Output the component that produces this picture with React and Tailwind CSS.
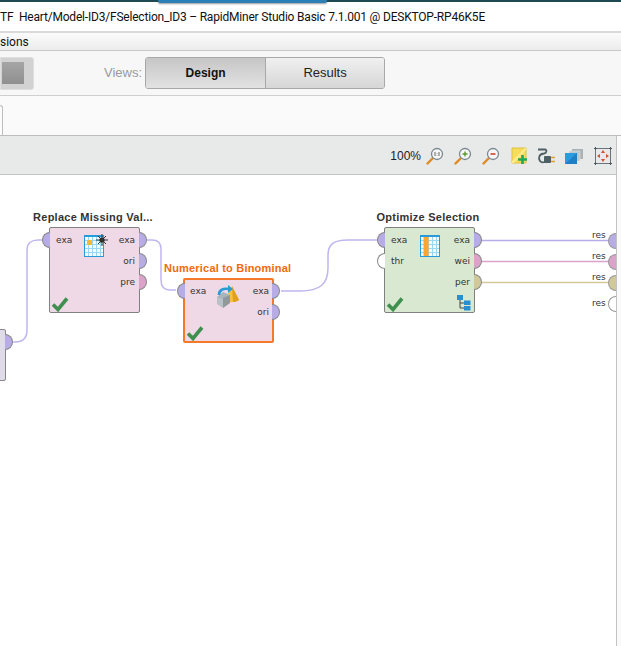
const font = "font-['Liberation_Sans',Arial,sans-serif]"

function Port({ side, top, color }) {
  const sideCls = side === 'left'
    ? 'left-[-8px] rounded-l-full border-r-0'
    : 'right-[-8px] rounded-r-full border-l-0'
  return <div className={`absolute w-[8px] h-[16px] border-[1.5px] border-[#888] ${sideCls}`} style={{ top, backgroundColor: color }} />
}

function PortLabel({ children }) {
  return <div className="h-[21px] text-[9px] leading-[21px] text-[#333] font-['DejaVu_Sans',sans-serif]">{children}</div>
}

function Check() {
  return (
    <svg viewBox="0 0 18 16" className="absolute left-[1px] bottom-0 w-[18px] h-[16px]" fill="none">
      <path d="M2 8.5 L7 13.5 L16 2.5" stroke="#3f8f4f" strokeWidth="3.6" />
    </svg>
  )
}

function GridIcon({ className, children }) {
  const cols = [4, 8, 12, 16]
  const rows = [4, 8, 12, 16]
  return (
    <svg viewBox="0 0 20 22" className={className}>
      <rect x="0.5" y="0.5" width="19" height="21" fill="#f4fbff" stroke="#2a9bd8" />
      {cols.map((x) => <path key={x} d={`M${x}.5 1V21`} stroke="#9dd4f2" />)}
      {rows.map((y) => <path key={y} d={`M1 ${y + 1}.5H19`} stroke="#9dd4f2" />)}
      {children}
      <path d="M0 1H20" stroke="#2a9bd8" strokeWidth="2" />
    </svg>
  )
}

function Node({ title, titleColor = 'text-[#333]', pos, size, bg, border, selected, left, right, icon }) {
  const pad = selected ? 'pt-[1px] pl-[5px] pr-[3px]' : 'pt-[2px] pl-[6px] pr-[4px]'
  const first = selected ? 3 : 4
  return (
    <div className={`absolute ${pos}`}>
      <div className={`absolute left-[-36px] top-[-16px] w-[160px] text-center text-[11px] leading-[13px] font-bold tracking-[0.25px] whitespace-nowrap ${titleColor} ${font}`}>{title}</div>
      <div className={`relative w-[91px] ${size} ${bg} ${border} rounded-[2px] ${pad} flex justify-between`}>
        <div>{left.map((p) => <PortLabel key={p.name}>{p.name}</PortLabel>)}</div>
        <div className="text-right">{right.map((p) => <PortLabel key={p.name}>{p.name}</PortLabel>)}</div>
        {left.map((p, i) => <Port key={p.name} side="left" top={first + i * 21} color={p.color} />)}
        {right.map((p, i) => <Port key={p.name} side="right" top={first + i * 21} color={p.color} />)}
        {icon}
        <Check />
      </div>
    </div>
  )
}

function Lens({ children }) {
  return (
    <svg viewBox="0 0 18 18" className="w-[18px] h-[18px]" fill="none">
      <path d="M1.5 16.5 L7 11" stroke="#e08a24" strokeWidth="2.4" strokeLinecap="round" />
      <circle cx="11" cy="7" r="5.5" fill="#f7f7f7" stroke="#7b8a90" strokeWidth="1.3" />
      {children}
    </svg>
  )
}

function Toolbar() {
  return (
    <div className="h-[39px] shrink-0 bg-[#e8e9e9] border-b border-[#c4c4c4] flex items-center justify-end gap-[10px] pr-[4px] pt-[2px]">
      <span className="text-[12px] text-[#222] mr-[-5px]">100%</span>
      <Lens><path d="M9 5v4M11 6v.5M11 8v.5M13 5v4" stroke="#666" /></Lens>
      <Lens><path d="M8.5 7h5M11 4.5v5" stroke="#5a9a30" strokeWidth="1.4" /></Lens>
      <Lens><path d="M8.5 7h5" stroke="#d2402a" strokeWidth="1.6" /></Lens>
      <svg viewBox="0 0 18 18" className="w-[18px] h-[18px] ml-[1px]">
        <path d="M1 1H15V16H1Z" fill="#f5dd5a" stroke="#e0c040" />
        <path d="M1 14L14 1H15V3L3 16H1Z" fill="#fbeb8a" />
        <path d="M11.5 8v9M7 12.5h9" stroke="#20a858" strokeWidth="2.6" />
      </svg>
      <svg viewBox="0 0 20 18" className="w-[20px] h-[18px] ml-[-3px]" fill="none">
        <path d="M2 2.5H9C11 2.5 11 6 8 6.5C3 7 2 11 4 14C5 15.5 7 15.5 9 15" stroke="#4f5f66" strokeWidth="1.8" />
        <rect x="8" y="9" width="7" height="7" rx="1" fill="#4f5f66" />
        <path d="M15 10.5h4" stroke="#e0a030" strokeWidth="1.5" />
        <path d="M15 14.5h4" stroke="#e0a030" strokeWidth="1.5" />
      </svg>
      <svg viewBox="0 0 20 16" className="w-[20px] h-[16px] ml-[-2px]">
        <rect x="8" y="1" width="11" height="10" fill="#a9b2b6" />
        <rect x="5" y="3" width="11" height="10" fill="#c0c7ca" stroke="#e8e9e9" strokeWidth=".5" />
        <rect x="1" y="5" width="12" height="11" fill="#2b9be0" />
        <path d="M1 16L13 5V16Z" fill="#1f7fc4" />
      </svg>
      <svg viewBox="0 0 18 18" className="w-[18px] h-[18px]" fill="none">
        <rect x="1.5" y="1.5" width="15" height="15" stroke="#6b7378" />
        <path d="M0 1.5h3M1.5 0v3M15 1.5h3M16.5 0v3M0 16.5h3M1.5 15v3M15 16.5h3M16.5 15v3" stroke="#4f5a60" />
        <path d="M9 3l2 3H7zM9 15l2-3H7zM3 9l3-2v4zM15 9l-3-2v4z" fill="#d2502a" />
      </svg>
    </div>
  )
}

function Canvas() {
  const purple = '#b7ace6'
  const pink = '#dba3c9'
  const tan = '#d1c99a'
  return (
    <div className="relative flex-1 overflow-hidden bg-white">
      <svg className="absolute left-0 top-0 w-[616px] h-[471px]" viewBox="0 175 616 471" fill="none" strokeWidth="1.5">
        <path d="M13 342H15C23 342 27 338 27 330V250C27 243 32 240 38 240H42" stroke="#c0b6ee" />
        <path d="M147 240H152C158 240 161 243 161 249V280C161 287 164 290 170 290H176" stroke="#c0b6ee" />
        <path d="M281 291H300C320 291 328 284 328 268V255C328 244 334 240 348 240H378" stroke="#c0b6ee" />
        <path d="M481 240.5H609" stroke={purple} />
        <path d="M481 261.5H609" stroke={pink} />
        <path d="M481 282.5H609" stroke={tan} />
      </svg>

      {/* operator cut off at the left edge */}
      <div className="absolute left-[-90px] top-[154px] w-[96px] h-[52px] bg-[#dfdbe9] border border-[#888] rounded-[2px]">
        <Port side="right" top={4} color={purple} />
      </div>

      <Node
        title="Replace Missing Val..."
        pos="left-[49px] top-[52px]"
        size="h-[86px]"
        bg="bg-[#f0d9e6]"
        border="border border-[#808080]"
        left={[{ name: 'exa', color: purple }]}
        right={[{ name: 'exa', color: purple }, { name: 'ori', color: purple }, { name: 'pre', color: pink }]}
        icon={
          <div className="absolute left-[34px] top-[7px] w-[22px] h-[23px]">
            <GridIcon className="w-[20px] h-[22px]">
              <rect x="3" y="5" width="5" height="5" fill="#f8b830" />
            </GridIcon>
            <svg viewBox="0 0 12 12" className="absolute right-[-2px] top-[-1px] w-[12px] h-[12px]">
              <circle cx="6" cy="6" r="2.6" fill="#222" />
              <path d="M6 0v12M0 6h12M2 2l8 8M10 2l-8 8" stroke="#333" />
            </svg>
          </div>
        }
      />

      <div className="absolute left-[164px] top-[87px] text-[11px] leading-[13px] font-bold tracking-[0.2px] text-[#f26a0a] whitespace-nowrap font-['Liberation_Sans',Arial,sans-serif]">Numerical to Binominal</div>
      <Node
        title=""
        pos="left-[183px] top-[103px]"
        size="h-[65px]"
        bg="bg-[#f0d9e6]"
        border="border-2 border-[#f5792a]"
        selected
        left={[{ name: 'exa', color: purple }]}
        right={[{ name: 'exa', color: purple }, { name: 'ori', color: purple }]}
        icon={
          <svg viewBox="0 0 24 24" className="absolute left-[31px] top-[5px] w-[24px] h-[24px]" fill="none">
            <path d="M16 1L23 15C19 18 12 18 9 15Z" fill="#f5c23c" />
            <path d="M16 1L23 15C21 16.5 19 17 17 17Z" fill="#e0a020" />
            <path d="M1 12V16L7 20L14 16V10L7 7Z" fill="#a9b4ba" />
            <path d="M7 13L14 10V18L7 23Z" fill="#8d999f" />
            <path d="M1 12L7 14V23L1 19Z" fill="#b7c1c6" />
            <path d="M3 10C3 5 7 3 13 4" stroke="#2a9bd8" strokeWidth="2.6" />
            <path d="M12 0L17 4L12 8Z" fill="#2a9bd8" />
          </svg>
        }
      />

      <Node
        title="Optimize Selection"
        pos="left-[384px] top-[52px]"
        size="h-[86px]"
        bg="bg-[#d9e8d0]"
        border="border border-[#808080]"
        left={[{ name: 'exa', color: purple }, { name: 'thr', color: '#fff' }]}
        right={[{ name: 'exa', color: purple }, { name: 'wei', color: pink }, { name: 'per', color: tan }]}
        icon={
          <>
            <GridIcon className="absolute left-[35px] top-[7px] w-[20px] h-[22px]">
              <rect x="3.5" y="2" width="5" height="19" fill="#f8a830" />
            </GridIcon>
            <svg viewBox="0 0 14 16" className="absolute right-[3px] bottom-[1px] w-[14px] h-[16px]" fill="none">
              <path d="M3 4V13H8M3 8H8" stroke="#444" />
              <rect x="0" y="0" width="6" height="5" fill="#2a8fd0" />
              <rect x="7" y="5.5" width="6.5" height="4.5" fill="#2a8fd0" />
              <rect x="7" y="11" width="6.5" height="4.5" fill="#2a8fd0" />
            </svg>
          </>
        }
      />

      {/* result ports on the right edge */}
      <div className="absolute right-0 top-[54px] flex flex-col items-end">
        {[purple, pink, tan, '#fff'].map((c, i) => (
          <div key={c} className="relative h-[21px] w-[30px] pl-[6px]">
            <div className={`text-[9px] leading-[13px] text-[#333] font-['DejaVu_Sans',sans-serif] ${i === 3 ? 'mt-[5px]' : ''}`}>res</div>
            <div className="absolute right-0 top-[4px] w-[8px] h-[16px] rounded-l-full border-[1.5px] border-r-0 border-[#999]" style={{ backgroundColor: c }} />
          </div>
        ))}
      </div>
    </div>
  )
}

export default function App() {
  return (
    <div className={`relative w-[621px] h-[646px] overflow-hidden flex flex-col bg-white ${font}`}>
      <div className="h-[2px] shrink-0 bg-[#1d4a52]" />
      <div className="absolute left-[158px] top-0 w-[169px] h-[3px] bg-[#2b7fb5] rounded-b-[2px] shadow-[0_1px_2px_rgba(0,0,0,0.4)]" />

      <div className="h-[31px] shrink-0 bg-white flex items-center justify-start overflow-hidden whitespace-nowrap text-[12px] tracking-[-0.2px] text-[#111] font-['Roboto',sans-serif] border-b-2 border-[#d9d9d9]">
        TF&nbsp; Heart/Model-ID3/FSelection_ID3 – RapidMiner Studio Basic 7.1.001 @ DESKTOP-RP46K5E
      </div>

      <div className="h-[18px] shrink-0 bg-gradient-to-b from-[#fbfbfb] to-[#ececec] border-b border-[#c8c8c8] text-[12px] leading-[18px] text-[#111] font-['Roboto',sans-serif]">sions</div>

      <div className="h-[45px] shrink-0 bg-[#f7f7f7] border-b border-[#cfcfcf] flex items-center">
        <div className="w-[34px] h-[33px] bg-[#d2d2d2] border border-[#dedede] rounded-r-[3px] flex items-center">
          <div className="w-[22px] h-[22px] ml-px bg-gradient-to-b from-[#a5a5a5] to-[#8f8f8f]" />
        </div>
        <span className="ml-[70px] text-[13px] text-[#9a9a9a]">Views:</span>
        <div className="ml-[3px] flex w-[240px] h-[32px] border border-[#a8a8a8] rounded-[3px] overflow-hidden text-[13px]">
          <div className="w-[120px] flex items-center justify-center text-[12px] font-bold text-[#111] bg-gradient-to-b from-[#c6c6c6] to-[#e2e2e2] border-r border-[#a8a8a8]">Design</div>
          <div className="flex-1 flex items-center justify-center text-[#222] bg-gradient-to-b from-[#f0f0f0] to-[#d6d6d6]">Results</div>
        </div>
      </div>

      <div className="h-[40px] shrink-0 bg-[#fafafa] border-b border-[#bdbdbd] flex items-end">
        <div className="w-[3px] h-[30px] bg-[#fcfcfc] border-r border-t border-[#bdbdbd] rounded-tr-[3px]" />
      </div>

      <div className="flex-1 flex min-h-0 bg-[#fafafa]">
        <div className="w-[617px] flex flex-col border-r border-[#c4c4c4]">
          <Toolbar />
          <Canvas />
        </div>
      </div>
    </div>
  )
}
